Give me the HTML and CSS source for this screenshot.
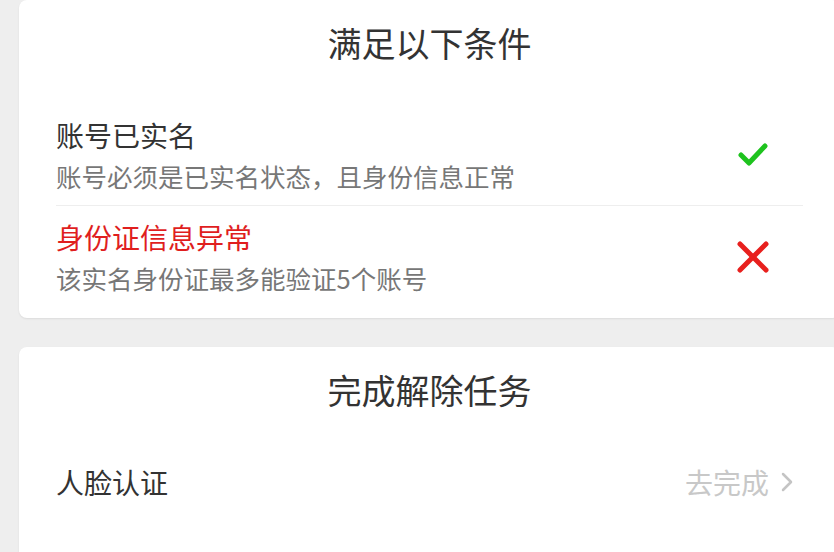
FILE: index.html
```html
<!DOCTYPE html>
<html lang="zh-CN">
<head>
    <meta charset="UTF-8">
    <meta name="viewport" content="width=device-width, initial-scale=1.0">
    <title>解除限制</title>
    <link rel="stylesheet" href="styles.css">
</head>
<body>
    <div class="page">
        <div class="card">
            <h2 class="card-title">满足以下条件</h2>
            <div class="row">
                <div class="row-text">
                    <p class="row-name">账号已实名</p>
                    <p class="row-desc">账号必须是已实名状态，且身份信息正常</p>
                </div>
                <div class="row-icon">
                    <svg width="32" height="28" viewBox="0 0 32 28">
                        <polyline points="4,14 12,22 28,5" fill="none" stroke="#1ec31e" stroke-width="5" stroke-linecap="round" stroke-linejoin="round"/>
                    </svg>
                </div>
            </div>
            <div class="row">
                <div class="row-text">
                    <p class="row-name error">身份证信息异常</p>
                    <p class="row-desc">该实名身份证最多能验证5个账号</p>
                </div>
                <div class="row-icon">
                    <svg width="34" height="34" viewBox="0 0 34 34">
                        <line x1="4" y1="4" x2="30" y2="30" stroke="#e8201e" stroke-width="5" stroke-linecap="round"/>
                        <line x1="30" y1="4" x2="4" y2="30" stroke="#e8201e" stroke-width="5" stroke-linecap="round"/>
                    </svg>
                </div>
            </div>
        </div>

        <div class="card card-tasks">
            <h2 class="card-title">完成解除任务</h2>
            <div class="row task">
                <p class="row-name">人脸认证</p>
                <a class="go" href="#">去完成
                    <svg width="14" height="20" viewBox="0 0 14 20">
                        <polyline points="3,2 11,10 3,18" fill="none" stroke="#c4c4c4" stroke-width="2.5" stroke-linecap="round" stroke-linejoin="round"/>
                    </svg>
                </a>
            </div>
        </div>
    </div>
</body>
</html>
```

FILE: styles.css
```css
* {
    margin: 0;
    padding: 0;
    box-sizing: border-box;
}

body {
    background-color: #eeeeee;
    font-family: "Noto Sans CJK SC", "Liberation Sans", sans-serif;
    overflow: hidden;
    width: 834px;
    height: 552px;
}

.page {
    padding-left: 19px;
    margin-right: -6px;
}

.card {
    background-color: white;
    border-radius: 8px;
    padding: 0 37px 11px 37px;
    margin-bottom: 29px;
    box-shadow: 0 1px 2px rgba(0, 0, 0, 0.08);
}

.card-tasks {
    padding-bottom: 80px;
}

.card-title {
    font-size: 34px;
    font-weight: normal;
    color: #333;
    text-align: center;
    line-height: 40px;
    padding: 23px 0 41px 0;
}

.row {
    display: flex;
    align-items: center;
    padding: 11px 0 10px 0;
}

.row + .row {
    border-top: 1px solid #eeeeee;
}

.row-text {
    flex: 1;
}

.row-name {
    font-size: 28px;
    line-height: 40px;
    color: #333;
}

.row-name.error {
    color: #e01e1e;
}

.row-desc {
    font-size: 25.5px;
    line-height: 38px;
    margin-top: 2px;
    color: #777;
}

.row-icon {
    width: 60px;
    margin-right: 20px;
    display: flex;
    justify-content: center;
}

.task {
    justify-content: space-between;
}

.task .row-name {
    flex: 1;
}

.go {
    display: flex;
    align-items: center;
    gap: 11px;
    font-size: 28px;
    color: #c8c8c8;
    text-decoration: none;
    margin-right: 9px;
}
```
